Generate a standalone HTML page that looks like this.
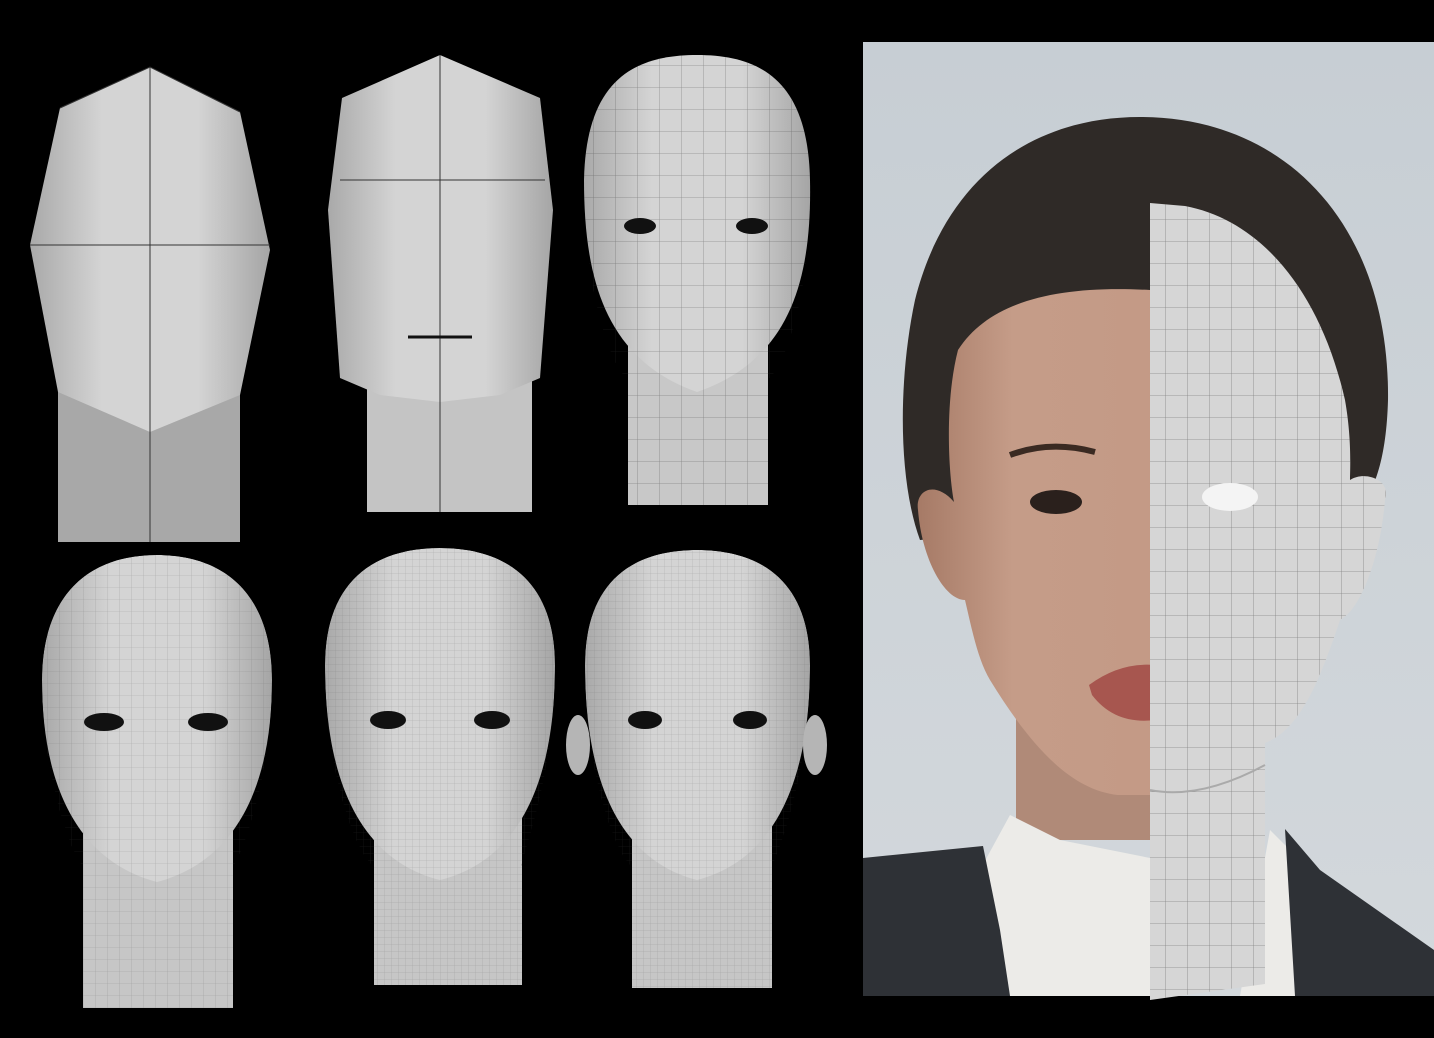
<!DOCTYPE html>
<html><head><meta charset="utf-8"><style>
html,body{margin:0;padding:0;background:#000;width:1434px;height:1038px;overflow:hidden}
</style></head><body>
<svg width="1434" height="1038" viewBox="0 0 1434 1038" xmlns="http://www.w3.org/2000/svg">
<defs>
<linearGradient id="hg" x1="0" x2="1" y1="0" y2="0">
<stop offset="0" stop-color="#a9a9a9"/><stop offset="0.3" stop-color="#d4d4d4"/><stop offset="0.7" stop-color="#d4d4d4"/><stop offset="1" stop-color="#a5a5a5"/></linearGradient>
<linearGradient id="bg" x1="0" x2="0" y1="0" y2="1">
<stop offset="0" stop-color="#c7ced4"/><stop offset="1" stop-color="#d3d8dc"/></linearGradient>
<linearGradient id="skin" x1="0" x2="1"><stop offset="0" stop-color="#a67a66"/><stop offset="0.4" stop-color="#c59c88"/><stop offset="1" stop-color="#c49a86"/></linearGradient>
<pattern id="grid" width="12" height="12" patternUnits="userSpaceOnUse"><path d="M12 0V12M0 12H12" stroke="#555" stroke-width="0.6" fill="none"/></pattern>
<pattern id="grid3" width="22" height="22" patternUnits="userSpaceOnUse"><path d="M22 0V22M0 22H22" stroke="#333" stroke-width="0.8" fill="none"/></pattern>
<pattern id="grid2" width="7" height="7" patternUnits="userSpaceOnUse"><path d="M7 0V7M0 7H7" stroke="#555" stroke-width="0.5" fill="none"/></pattern>
<clipPath id="c3"><path d="M697 55C760 55 808 80 810 180C812 280 790 360 768 380V505H628V380C606 360 584 280 584 180C586 80 634 55 697 55Z"/></clipPath>
</defs>
<rect width="1434" height="1038" fill="#000"/>

<!-- Head 1 -->
<rect x="58" y="380" width="182" height="162" fill="#a8a8a8"/>
<polygon points="150,67 240,112 270,250 240,395 150,432 58,392 30,245 60,108" fill="url(#hg)"/>
<path d="M150 67V542M60 108L150 67 240 112M30 245H270" stroke="#333" stroke-width="1" fill="none"/>

<!-- Head 2 -->
<rect x="367" y="370" width="165" height="142" fill="#c4c4c4"/>
<polygon points="440,55 540,98 553,210 540,378 500,395 440,402 380,395 340,378 328,210 342,98" fill="url(#hg)"/>
<path d="M440 55V512M340 180H545" stroke="#333" stroke-width="1" fill="none"/>
<path d="M408 337H472" stroke="#111" stroke-width="3"/>

<!-- Head 3 -->
<rect x="628" y="330" width="140" height="175" fill="#c8c8c8"/>
<path d="M697 55C760 55 808 80 810 180C812 280 790 360 697 392C606 360 584 280 584 180C586 80 634 55 697 55Z" fill="url(#hg)"/>
<rect x="584" y="55" width="226" height="450" fill="url(#grid3)" opacity="0.45" clip-path="url(#c3)"/>
<ellipse cx="640" cy="226" rx="16" ry="8" fill="#111"/><ellipse cx="752" cy="226" rx="16" ry="8" fill="#111"/>

<!-- Head 4 -->
<rect x="83" y="800" width="150" height="208" fill="#c6c6c6"/>
<path d="M157 555C230 555 272 600 272 680C272 780 240 860 157 882C74 860 42 780 42 680C42 600 84 555 157 555Z" fill="url(#hg)"/>

<!-- Head 5 -->
<rect x="374" y="800" width="148" height="185" fill="#c6c6c6"/>
<path d="M440 548C515 548 555 590 555 665C555 780 520 860 440 880C360 860 325 780 325 665C325 590 365 548 440 548Z" fill="url(#hg)"/>

<!-- Head 6 -->
<rect x="632" y="800" width="140" height="188" fill="#c6c6c6"/>
<path d="M697 550C770 550 810 590 810 665C810 780 775 860 697 880C619 860 585 780 585 665C585 590 624 550 697 550Z" fill="url(#hg)"/>

<g opacity="0.35">
<rect x="42" y="555" width="230" height="453" fill="url(#grid)"/>
<rect x="325" y="548" width="230" height="437" fill="url(#grid2)"/>
<rect x="585" y="550" width="225" height="438" fill="url(#grid2)"/>
</g>
<path d="M0 548H830V1038H0Z M157 555C230 555 272 600 272 680C272 780 240 860 233 866V1008H83V866C74 860 42 780 42 680C42 600 84 555 157 555Z M440 548C515 548 555 590 555 665C555 780 520 860 522 866V985H374V866C360 860 325 780 325 665C325 590 365 548 440 548Z M697 550C770 550 810 590 810 665C810 780 775 860 772 866V988H632V866C619 860 585 780 585 665C585 590 624 550 697 550Z" fill="#000" fill-rule="evenodd"/>
<ellipse cx="578" cy="745" rx="12" ry="30" fill="#b5b5b5"/><ellipse cx="815" cy="745" rx="12" ry="30" fill="#b5b5b5"/>
<ellipse cx="104" cy="722" rx="20" ry="9" fill="#111"/><ellipse cx="208" cy="722" rx="20" ry="9" fill="#111"/>
<ellipse cx="388" cy="720" rx="18" ry="9" fill="#111"/><ellipse cx="492" cy="720" rx="18" ry="9" fill="#111"/>
<ellipse cx="645" cy="720" rx="17" ry="9" fill="#111"/><ellipse cx="750" cy="720" rx="17" ry="9" fill="#111"/>

<!-- Right photo panel -->
<rect x="863" y="42" width="571" height="954" fill="url(#bg)"/>
<!-- hair -->
<path d="M1140 117C1290 117 1390 230 1388 400C1386 470 1370 500 1350 520L1150 520L920 540C898 480 898 380 915 300C945 180 1030 117 1140 117Z" fill="#2f2a27"/>
<!-- neck -->
<rect x="1016" y="690" width="140" height="150" fill="#b08a78"/>
<!-- shirt -->
<path d="M960 996L980 870L1010 815L1060 840L1160 860V996Z" fill="#ecebe8"/>
<path d="M1270 830L1300 860L1300 996L1240 996Z" fill="#ecebe8"/>
<!-- suit -->
<path d="M863 858L983 846L1000 930L1010 996L863 996Z" fill="#2e3136"/>
<path d="M1285 829L1320 870L1434 950V996H1295Z" fill="#2e3136"/>
<!-- face -->
<path d="M1150 290C1060 285 990 300 958 350C945 400 948 470 954 502C935 480 915 490 918 510C922 560 945 600 965 600C972 630 978 660 990 680C1030 745 1070 790 1118 795L1155 795V290Z" fill="url(#skin)"/>
<!-- left eye/brow/lips/nose -->
<ellipse cx="1056" cy="502" rx="26" ry="12" fill="#2a201c"/>
<path d="M1010 455Q1050 440 1095 452" stroke="#3a2a22" stroke-width="6" fill="none"/>
<path d="M1089 685Q1120 662 1155 665V720Q1115 725 1092 695Z" fill="#a7564f"/>
<!-- mesh half -->
<path d="M1150 203L1185 206C1260 220 1320 290 1345 400C1352 440 1350 470 1350 480C1365 470 1392 480 1385 500C1380 560 1360 610 1340 620C1320 680 1300 730 1265 743V984L1150 1000Z" fill="#d6d6d6"/>
<path d="M1150 203L1185 206C1260 220 1320 290 1345 400C1352 440 1350 470 1350 480C1365 470 1392 480 1385 500C1380 560 1360 610 1340 620C1320 680 1300 730 1265 743V984L1150 1000Z" fill="url(#grid3)" opacity="0.5"/>
<path d="M1150 790Q1200 800 1265 765" stroke="#aaa" stroke-width="2" fill="none"/>
<ellipse cx="1230" cy="497" rx="28" ry="14" fill="#f4f4f4"/>
</svg>
</body></html>
